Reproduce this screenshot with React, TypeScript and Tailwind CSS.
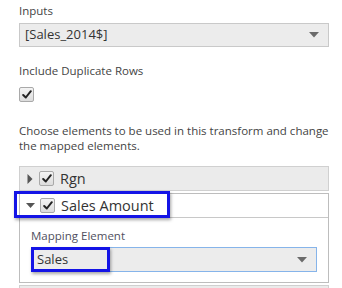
import React from "react";

function Check() {
  return (
    <span className="inline-flex items-center justify-center w-[15px] h-[15px] rounded-[2px] border border-[#a9a9a9] bg-gradient-to-b from-[#f4f4f4] to-[#dcdcdc]">
      <svg width="10" height="9" viewBox="0 0 10 9">
        <path d="M1.2 5 L3.8 7.5 L8.8 1.2" fill="none" stroke="#222" strokeWidth="2" strokeLinecap="round" strokeLinejoin="round" />
      </svg>
    </span>
  );
}

function Arrow() {
  return (
    <svg width="10" height="6" viewBox="0 0 10 6">
      <path d="M0 0 H10 L5 5.5 Z" fill="#6b6b6b" />
    </svg>
  );
}

export default function App() {
  return (
    <div
      className="relative w-[342px] h-[288px] overflow-hidden bg-white pl-[19px] pr-[13px] pt-[3px] text-[#444]"
      style={{ fontFamily: '"Open Sans", "Noto Sans", sans-serif' }}
    >
      <div className="text-[11.5px] leading-[16px] h-[20px]">Inputs</div>
      <div className="flex items-center justify-between h-[24px] border border-[#c9c9c9] bg-[#ececec] pl-[5px] pr-[9px]">
        <span className="text-[13px] text-[#333]">[Sales_2014$]</span>
        <Arrow />
      </div>
      <div className="mt-[16px] text-[11.5px] leading-[16px] h-[24px]">Include Duplicate Rows</div>
      <div className="flex h-[15px]">
        <Check />
      </div>
      <div className="mt-[21px] text-[11.5px] leading-[15px] text-[#444]">
        Choose elements to be used in this transform and change the mapped elements.
      </div>
      <div className="mt-[13px] flex items-center h-[25px] border border-[#d0d0d0] bg-[#ebebeb] pl-[7px]">
        <svg width="6" height="10" viewBox="0 0 6 10"><path d="M0.5 0 V10 L5.5 5 Z" fill="#555" /></svg>
        <span className="ml-[6px] flex"><Check /></span>
        <span className="ml-[6px] text-[14.5px] text-[#333]">Rgn</span>
      </div>
      <div className="mt-[2px] border border-[#bdbdbd] bg-white">
        <div className="relative flex items-center h-[24px] border-b border-[#c8c8c8] pl-[6px]">
          <svg width="10" height="6" viewBox="0 0 10 6"><path d="M0 0 H9 L4.5 5 Z" fill="#555" /></svg>
          <span className="ml-[4px] flex"><Check /></span>
          <span className="ml-[6px] text-[14.5px] text-[#333]">Sales Amount</span>
          <div className="absolute left-[-6px] top-[-3px] w-[156px] h-[27px] border-[3px] border-[#1414e6] shadow-[1px_2px_3px_rgba(0,0,0,0.35)]" />
        </div>
        <div className="pl-[11px] pr-[11px] pt-[10px] pb-[10px]">
          <div className="text-[11.5px] leading-[16px] h-[19px] text-[#505060]">Mapping Element</div>
          <div className="relative flex items-center justify-between h-[25px] border border-[#86b4ea] bg-[#ececec] pl-[5px] pr-[9px]">
            <span className="text-[13px] text-[#333]">Sales</span>
            <Arrow />
            <div className="absolute left-[-1px] top-[-1px] w-[79px] h-[25px] border-[3px] border-[#1414e6] shadow-[1px_2px_3px_rgba(0,0,0,0.35)]" />
          </div>
        </div>
      </div>
      <div className="mt-[2px] h-[10px] border border-[#d0d0d0] bg-[#ebebeb]" />
    </div>
  );
}
